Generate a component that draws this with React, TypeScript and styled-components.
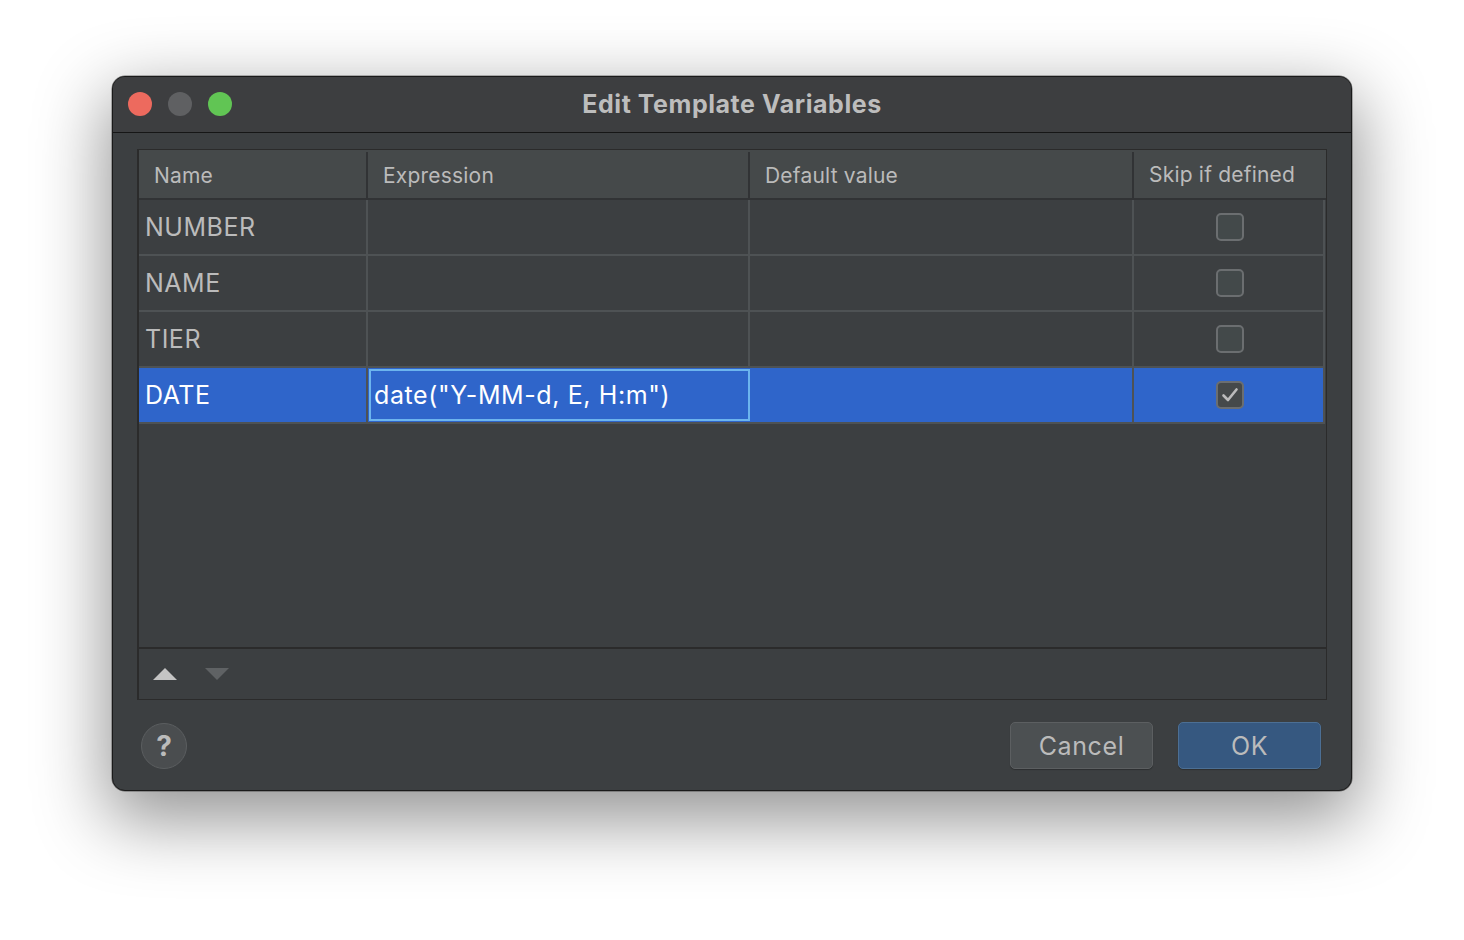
import React, { useState } from "react";
import styled, { createGlobalStyle } from "styled-components";

interface Variable {
  name: string;
  expression: string;
  defaultValue: string;
  skip: boolean;
}

const GlobalStyle = createGlobalStyle`
  html, body {
    margin: 0;
    padding: 0;
    background: #ffffff;
  }
  * {
    box-sizing: border-box;
  }
`;

const Page = styled.div`
  width: 1464px;
  height: 940px;
  padding: 76px 112px 0 112px;
  font-family: Inter, "Noto Sans", "Liberation Sans", sans-serif;
`;

const Window = styled.div`
  width: 1240px;
  height: 715px;
  border: 1px solid #1a1a1a;
  border-radius: 13px;
  background: #3c3f41;
  overflow: hidden;
  display: flex;
  flex-direction: column;
  box-shadow: 0 24px 70px 6px rgba(0, 0, 0, 0.42), 0 0 0 0.5px rgba(0, 0, 0, 0.5);
`;

const TitleBar = styled.div`
  position: relative;
  height: 56px;
  flex: 0 0 56px;
  background: #3d3e40;
  border-bottom: 1px solid #161616;
  display: flex;
  align-items: center;
  justify-content: center;
`;

const Lights = styled.div`
  position: absolute;
  left: 15px;
  top: 15px;
  display: flex;
  gap: 16px;
`;

const Light = styled.span<{ $color: string }>`
  width: 24px;
  height: 24px;
  border-radius: 50%;
  background: ${(p) => p.$color};
`;

const Title = styled.div`
  font-size: 25px;
  font-weight: 700;
  color: #bdbdbd;
  letter-spacing: 0.55px;
  margin: 0 0 2px 0;
`;

const Body = styled.div`
  flex: 1;
  display: flex;
  flex-direction: column;
  padding: 16px 24px 0 24px;
`;

const Table = styled.div`
  height: 551px;
  border: 1px solid #2b2b2b;
  border-left-width: 2px;
  display: flex;
  flex-direction: column;
  background: #3c3f41;
`;

const Grid = styled.div`
  display: grid;
  grid-template-columns: 229px 382px 384px 1fr;
`;

const HeaderRow = styled(Grid)`
  height: 50px;
  background: #45494a;
  border-bottom: 2px solid #313335;
`;

const HeaderCell = styled.div<{ $last?: boolean }>`
  display: flex;
  align-items: center;
  padding-left: 15px;
  font-size: 21px;
  letter-spacing: 0.2px;
  color: #bbbbbb;
  border-right: ${(p) => (p.$last ? "none" : "2px solid #313335")};
  margin: ${(p) => (p.$last ? "0" : "2px 0 0")};
`;

const Rows = styled.div`
  flex: 1;
  display: flex;
  flex-direction: column;
  margin-right: 1px;
`;

const Row = styled(Grid)<{ $selected?: boolean }>`
  height: 56px;
  background: ${(p) => (p.$selected ? "#2f65ca" : "transparent")};
  border-bottom: 2px solid #4e5254;
  border-right: 2px solid #4e5254;
`;

const Cell = styled.div<{ $selected?: boolean; $center?: boolean }>`
  display: flex;
  align-items: center;
  justify-content: ${(p) => (p.$center ? "center" : "flex-start")};
  padding-left: ${(p) => (p.$center ? "0" : "6px")};
  font-size: 25px;
  letter-spacing: 0.5px;
  color: ${(p) => (p.$selected ? "#ffffff" : "#bbbbbb")};
  border-right: 2px solid #4e5254;
  &:last-child {
    border-right: none;
  }
`;

const Editor = styled.div`
  display: flex;
  align-items: center;
  margin: 1px 0 1px 1px;
  padding-left: 3px;
  border: 2px solid #6cb4ee;
  background: #2f65ca;
  color: #ffffff;
  font-size: 25px;
  letter-spacing: 0.6px;
`;

const Check = styled.span<{ $checked: boolean }>`
  width: 28px;
  height: 28px;
  border-radius: 5px;
  border: 2px solid #6b6e70;
  background: ${(p) => (p.$checked ? "#45494a" : "#43494a")};
  display: flex;
  align-items: center;
  justify-content: center;
  margin-left: 2px;
`;

const Spacer = styled.div`
  flex: 1;
`;

const ToolBar = styled.div`
  height: 52px;
  border-top: 2px solid #2b2b2b;
  display: flex;
  align-items: center;
  gap: 28px;
  padding-left: 14px;
`;

const ArrowButton = styled.button`
  border: none;
  background: transparent;
  padding: 0;
  width: 24px;
  height: 24px;
  display: flex;
  align-items: center;
  justify-content: center;
`;

const Footer = styled.div`
  flex: 1;
  display: flex;
  align-items: center;
  justify-content: space-between;
  padding: 1px 6px 0 4px;
`;

const HelpButton = styled.button`
  width: 46px;
  height: 46px;
  border-radius: 50%;
  border: 1px solid #5b5e60;
  background: #4a4d4f;
  color: #bbbbbb;
  font-family: Inter, "Liberation Sans", sans-serif;
  font-size: 28px;
  font-weight: 700;
  display: flex;
  align-items: center;
  justify-content: center;
  padding: 0;
`;

const Buttons = styled.div`
  display: flex;
  gap: 25px;
`;

const DialogButton = styled.button<{ $primary?: boolean }>`
  width: 143px;
  height: 47px;
  border-radius: 5px;
  border: 1px solid ${(p) => (p.$primary ? "#4c6f94" : "#5c5f61")};
  background: ${(p) => (p.$primary ? "#365880" : "#4c5052")};
  color: #bbbbbb;
  font-family: Inter, "Liberation Sans", sans-serif;
  font-size: 25px;
  letter-spacing: 0.6px;
  box-shadow: 0 1px 1px rgba(0, 0, 0, 0.25);
`;

const initial: Variable[] = [
  { name: "NUMBER", expression: "", defaultValue: "", skip: false },
  { name: "NAME", expression: "", defaultValue: "", skip: false },
  { name: "TIER", expression: "", defaultValue: "", skip: false },
  { name: "DATE", expression: 'date("Y-MM-d, E, H:m")', defaultValue: "", skip: true },
];

export default function App() {
  const [vars, setVars] = useState<Variable[]>(initial);
  const [selected] = useState(3);

  const toggle = (i: number) =>
    setVars((v) => v.map((x, j) => (j === i ? { ...x, skip: !x.skip } : x)));

  return (
    <Page>
      <GlobalStyle />
      <Window>
        <TitleBar>
          <Lights>
            <Light $color="#ed6a5e" />
            <Light $color="#5f6062" />
            <Light $color="#61c554" />
          </Lights>
          <Title>Edit Template Variables</Title>
        </TitleBar>
        <Body>
          <Table>
            <HeaderRow>
              <HeaderCell>Name</HeaderCell>
              <HeaderCell>Expression</HeaderCell>
              <HeaderCell>Default value</HeaderCell>
              <HeaderCell $last>Skip if defined</HeaderCell>
            </HeaderRow>
            <Rows>
              {vars.map((v, i) => {
                const sel = i === selected;
                return (
                  <Row key={v.name} $selected={sel}>
                    <Cell $selected={sel}>{v.name}</Cell>
                    {sel ? <Editor>{v.expression}</Editor> : <Cell>{v.expression}</Cell>}
                    <Cell $selected={sel}>{v.defaultValue}</Cell>
                    <Cell $center onClick={() => toggle(i)}>
                      <Check $checked={v.skip}>
                        {v.skip && (
                          <svg width="18" height="16" viewBox="0 0 18 16">
                            <path
                              d="M2.5 8.5 L7 13 L15.5 2.5"
                              fill="none"
                              stroke="#bbbbbb"
                              strokeWidth="2.6"
                              strokeLinecap="round"
                              strokeLinejoin="round"
                            />
                          </svg>
                        )}
                      </Check>
                    </Cell>
                  </Row>
                );
              })}
              <Spacer />
            </Rows>
            <ToolBar>
              <ArrowButton>
                <svg width="24" height="12" viewBox="0 0 24 12">
                  <path d="M0 12 L12 0 L24 12 Z" fill="#c4c4c4" />
                </svg>
              </ArrowButton>
              <ArrowButton>
                <svg width="24" height="12" viewBox="0 0 24 12">
                  <path d="M0 0 L24 0 L12 12 Z" fill="#5f6264" />
                </svg>
              </ArrowButton>
            </ToolBar>
          </Table>
          <Footer>
            <HelpButton>?</HelpButton>
            <Buttons>
              <DialogButton>Cancel</DialogButton>
              <DialogButton $primary>OK</DialogButton>
            </Buttons>
          </Footer>
        </Body>
      </Window>
    </Page>
  );
}
